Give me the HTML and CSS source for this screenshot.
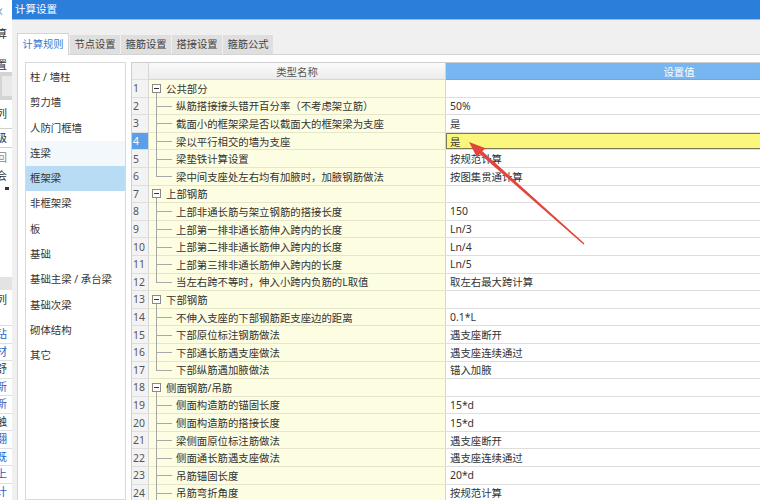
FILE: index.html
```html
<!DOCTYPE html>
<html lang="zh">
<head>
<meta charset="utf-8">
<title>计算设置</title>
<link rel="stylesheet" href="styles.css">
</head>
<body>
<div class="screen">
  <div class="bgwin">
    <div class="bw r0"><span class="chev">‹</span></div>
    <div class="bw r1"><span class="ch">算</span></div>
    <div class="bw r2"><span class="ch">置</span></div>
    <div class="bw r3"><span class="gbox"></span></div>
    <div class="bw r4"><span class="ch">列</span></div>
    <div class="bw r5"><span class="ch">级</span></div>
    <div class="bw r6"><span class="ch lt">回</span></div>
    <div class="bw r7"><span class="ch">会</span></div>
    <div class="bw r8"><span class="mark"></span></div>
    <div class="bw r9"></div>
    <div class="bw r10"></div>
    <div class="bw r11"><span class="ch">列</span></div>
    <div class="bw li"><span class="ch bl">钻</span></div>
    <div class="bw li"><span class="ch bl">材</span></div>
    <div class="bw li"><span class="ch">舒</span></div>
    <div class="bw li"><span class="ch bl">新</span></div>
    <div class="bw li"><span class="ch bl">新</span></div>
    <div class="bw li"><span class="ch">触</span></div>
    <div class="bw li"><span class="ch bl">翻</span></div>
    <div class="bw li"><span class="ch bl">既</span></div>
    <div class="bw li"><span class="ch bl">上</span></div>
    <div class="bw li"><span class="ch bl">计</span></div>
  </div>

  <div class="dialog">
    <div class="titlebar">计算设置</div>
    <div class="dlg-body">
      <div class="tabs">
        <div class="tab active">计算规则</div>
        <div class="tab">节点设置</div>
        <div class="tab">箍筋设置</div>
        <div class="tab">搭接设置</div>
        <div class="tab">箍筋公式</div>
      </div>
      <div class="pane">
        <ul class="cats">
          <li>柱 / 墙柱</li>
          <li>剪力墙</li>
          <li>人防门框墙</li>
          <li class="hover">连梁</li>
          <li class="sel">框架梁</li>
          <li>非框架梁</li>
          <li>板</li>
          <li>基础</li>
          <li>基础主梁 / 承台梁</li>
          <li>基础次梁</li>
          <li>砌体结构</li>
          <li>其它</li>
        </ul>
        <div class="grid">
          <div class="row hrow">
            <div class="num"></div>
            <div class="name">类型名称</div>
            <div class="val">设置值</div>
          </div>

          <div class="row"><div class="num">1</div><div class="name"><span class="box"></span>公共部分</div><div class="val"></div></div>
          <div class="row"><div class="num">2</div><div class="name"><span class="tw"></span>纵筋搭接接头错开百分率（不考虑架立筋）</div><div class="val">50%</div></div>
          <div class="row"><div class="num">3</div><div class="name"><span class="tw"></span>截面小的框架梁是否以截面大的框架梁为支座</div><div class="val">是</div></div>
          <div class="row"><div class="num cur">4</div><div class="name"><span class="tw"></span>梁以平行相交的墙为支座</div><div class="val cur">是</div></div>
          <div class="row"><div class="num">5</div><div class="name"><span class="tw"></span>梁垫铁计算设置</div><div class="val">按规范计算</div></div>
          <div class="row"><div class="num">6</div><div class="name"><span class="tw last"></span>梁中间支座处左右均有加腋时，加腋钢筋做法</div><div class="val">按图集贯通计算</div></div>

          <div class="row"><div class="num">7</div><div class="name"><span class="box"></span>上部钢筋</div><div class="val"></div></div>
          <div class="row"><div class="num">8</div><div class="name"><span class="tw"></span>上部非通长筋与架立钢筋的搭接长度</div><div class="val">150</div></div>
          <div class="row"><div class="num">9</div><div class="name"><span class="tw"></span>上部第一排非通长筋伸入跨内的长度</div><div class="val">Ln/3</div></div>
          <div class="row"><div class="num">10</div><div class="name"><span class="tw"></span>上部第二排非通长筋伸入跨内的长度</div><div class="val">Ln/4</div></div>
          <div class="row"><div class="num">11</div><div class="name"><span class="tw"></span>上部第三排非通长筋伸入跨内的长度</div><div class="val">Ln/5</div></div>
          <div class="row"><div class="num">12</div><div class="name"><span class="tw last"></span>当左右跨不等时，伸入小跨内负筋的L取值</div><div class="val">取左右最大跨计算</div></div>

          <div class="row"><div class="num">13</div><div class="name"><span class="box"></span>下部钢筋</div><div class="val"></div></div>
          <div class="row"><div class="num">14</div><div class="name"><span class="tw"></span>不伸入支座的下部钢筋距支座边的距离</div><div class="val">0.1*L</div></div>
          <div class="row"><div class="num">15</div><div class="name"><span class="tw"></span>下部原位标注钢筋做法</div><div class="val">遇支座断开</div></div>
          <div class="row"><div class="num">16</div><div class="name"><span class="tw"></span>下部通长筋遇支座做法</div><div class="val">遇支座连续通过</div></div>
          <div class="row"><div class="num">17</div><div class="name"><span class="tw last"></span>下部纵筋遇加腋做法</div><div class="val">锚入加腋</div></div>

          <div class="row"><div class="num">18</div><div class="name"><span class="box"></span>侧面钢筋/吊筋</div><div class="val"></div></div>
          <div class="row"><div class="num">19</div><div class="name"><span class="tw"></span>侧面构造筋的锚固长度</div><div class="val">15*d</div></div>
          <div class="row"><div class="num">20</div><div class="name"><span class="tw"></span>侧面构造筋的搭接长度</div><div class="val">15*d</div></div>
          <div class="row"><div class="num">21</div><div class="name"><span class="tw"></span>梁侧面原位标注筋做法</div><div class="val">遇支座断开</div></div>
          <div class="row"><div class="num">22</div><div class="name"><span class="tw"></span>侧面通长筋遇支座做法</div><div class="val">遇支座连续通过</div></div>
          <div class="row"><div class="num">23</div><div class="name"><span class="tw"></span>吊筋锚固长度</div><div class="val">20*d</div></div>
          <div class="row"><div class="num">24</div><div class="name"><span class="tw"></span>吊筋弯折角度</div><div class="val">按规范计算</div></div>
        </div>
      </div>
    </div>
  </div>

  <svg class="arrow" width="760" height="500" viewBox="0 0 760 500">
    <polygon fill="#e2453b" points="469,142 485.5,148.2 482.3,151.3 584.5,243.6 583.5,244.4 479.7,153.9 477.0,157.4"/>
  </svg>
</div>
</body>
</html>
```

FILE: styles.css
```css
* {
  box-sizing: border-box;
  margin: 0;
  padding: 0;
}

body {
  margin: 0;
  font-family: "Noto Sans", "Noto Sans CJK SC", sans-serif;
  font-size: 10px;
  color: #333;
  background: #fff;
}

.screen {
  width: 760px;
  height: 500px;
  display: flex;
  overflow: hidden;
  position: relative;
}

/* partial background window at the far left */
.bgwin {
  width: 12px;
  flex: none;
  display: flex;
  flex-direction: column;
  overflow: hidden;
  background: #fff;
}

.bw {
  display: flex;
  align-items: center;
  flex: none;
  font-size: 11px;
  line-height: 12px;
  color: #333;
  white-space: nowrap;
}

.bw .ch {
  margin-left: -4px;
}

.bw .ch.bl {
  color: #2b5fc4;
}

.bw .ch.lt {
  color: #888;
}

.r0 { height: 20px; }
.r1 { height: 28px; }
.r2 { height: 24px; align-items: flex-end; padding-bottom: 1px; }
.r3 { height: 28px; background: #d4d4d4; padding: 4px 0 4px 2px; }
.r4 { height: 28px; }
.r5 { height: 20px; border-top: 1px solid #cfcfcf; border-bottom: 1px solid #cfcfcf; }
.r6 { height: 20px; }
.r7 { height: 16px; }
.r8 { height: 9px; }
.r9 { height: 84px; }
.r10 { height: 13px; background: #e3e3e3; }
.r11 { height: 36px; align-items: flex-start; padding-top: 4px; border-bottom: 1px solid #dcdcdc; }
.li { height: 17.5px; border-bottom: 1px solid #dedede; }

.chev {
  color: #8fa3b8;
  font-size: 16px;
  line-height: 16px;
  margin-left: -2px;
}

.gbox {
  display: block;
  width: 100%;
  height: 100%;
  background: #e9e9e9;
}

.mark {
  display: block;
  width: 4px;
  height: 3px;
  background: #333;
  margin-left: 5px;
}

/* dialog */
.dialog {
  flex: 1;
  min-width: 0;
  display: flex;
  flex-direction: column;
}

.titlebar {
  flex: none;
  height: 20px;
  background: #2b7fdb;
  border-bottom: 1px solid #93c0ee;
  color: #fff;
  font-size: 10.5px;
  line-height: 19px;
  padding-left: 3px;
}

.dlg-body {
  flex: 1;
  min-height: 0;
  background: #f0f0f0;
  padding: 13px 0 0 5px;
  display: flex;
  flex-direction: column;
}

.tabs {
  flex: none;
  display: flex;
  align-items: flex-end;
  gap: 1px;
  height: 21px;
  font-size: 10.3px;
}

.tab {
  width: 50px;
  height: 19px;
  background: #dfdfdf;
  color: #444;
  text-align: center;
  line-height: 19px;
}

.tab.active {
  width: 52px;
  height: 22px;
  background: #fff;
  border: 1px solid #d4d4d4;
  border-bottom: none;
  color: #3b7bd0;
  line-height: 21px;
  margin-bottom: -1px;
  position: relative;
  z-index: 1;
}

.pane {
  flex: 1;
  min-height: 0;
  background: #fff;
  border: 1px solid #d4d4d4;
  border-right: none;
  border-bottom: none;
  display: flex;
  gap: 5px;
  padding: 7px 0 0 7px;
}

/* category list */
.cats {
  flex: none;
  width: 101px;
  border: 1px solid #d9d9d9;
  padding-top: 2px;
  list-style: none;
  font-size: 10.4px;
}

.cats li {
  height: 25.3px;
  line-height: 25.3px;
  padding-left: 4px;
  white-space: nowrap;
}

.cats li.hover {
  background: #f3f8fd;
}

.cats li.sel {
  background: #b9dcf5;
}

/* property grid */
.grid {
  flex: 1;
  min-width: 0;
  overflow: hidden;
  border-left: 1px solid #cfcfcf;
  border-top: 1px solid #cfcfcf;
  font-size: 10.4px;
}

.row {
  display: flex;
  width: 780px;
  height: 17.6px;
}

.row > div {
  height: 100%;
  display: flex;
  align-items: center;
  white-space: nowrap;
}

.num {
  flex: none;
  width: 17px;
  background: #f3f3f3;
  border-right: 1px solid #d6d6d6;
  border-bottom: 1px solid #dedede;
  padding-left: 1px;
  color: #555;
}

.num.cur {
  background: #5aa0e6;
  color: #fff;
}

.name {
  flex: none;
  width: 297px;
  background: #fdfde2;
  border-right: 1px solid #d6d6c4;
  border-bottom: 1px solid #e6e6cc;
  position: relative;
}

.val {
  flex: 1;
  padding-left: 4px;
  border-bottom: 1px solid #dedede;
}

.val.cur {
  background: #fbf77c;
  box-shadow: inset 0 0 0 1px #7b7a52;
}

.hrow {
  height: 17px;
}

.hrow .num {
  background: #f2f2f2;
}

.hrow .name {
  justify-content: center;
  background: linear-gradient(#fbfbfb, #ececec);
  border-bottom: 1px solid #d6d6d6;
  color: #555;
}

.hrow .val {
  justify-content: center;
  padding-left: 0;
  background: #78b6f2;
  color: #fff;
  border-bottom: 1px solid #6aa8e6;
}

/* tree connectors */
.tw {
  flex: none;
  width: 27px;
  align-self: stretch;
  position: relative;
}

.tw::before {
  content: "";
  position: absolute;
  left: 7px;
  top: 0;
  bottom: -1px;
  width: 1px;
  background: #a8a8a8;
}

.tw.last::before {
  bottom: 50%;
}

.tw::after {
  content: "";
  position: absolute;
  left: 7px;
  top: 50%;
  width: 16px;
  height: 1px;
  background: #a8a8a8;
}

.box {
  flex: none;
  width: 9px;
  height: 9px;
  border: 1px solid #8a8a8a;
  background: #fff;
  margin: 0 5px 0 3px;
  position: relative;
}

.box::before {
  content: "";
  position: absolute;
  left: 1px;
  right: 1px;
  top: 3px;
  height: 1px;
  background: #333;
}

.box::after {
  content: "";
  position: absolute;
  left: 3px;
  top: 8px;
  width: 1px;
  height: 6px;
  background: #a8a8a8;
}

/* annotation arrow */
.arrow {
  position: absolute;
  left: 0;
  top: 0;
  pointer-events: none;
}
```
